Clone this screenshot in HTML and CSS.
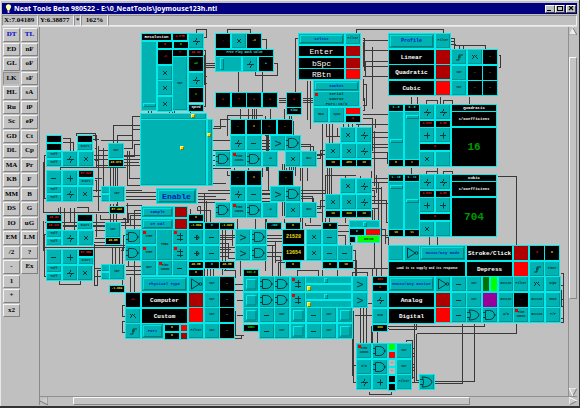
FILE: index.html
```html
<!DOCTYPE html>
<html lang="en">
<head>
<meta charset="utf-8">
<title>Neat Tools</title>
<link rel="stylesheet" href="styles.css">
</head>
<body>
<div class="window">
  <header class="titlebar">
    <svg class="bulb" viewBox="0 0 8 10" aria-hidden="true"><path d="M1 3a3 3 0 1 1 6 0c0 2-1.500 2-1.500 4h-3c0-2-1.500-2-1.500-4z" fill="#ffff9c"/><path d="M3 7h2v3H3z" fill="#ddd"/></svg>
    <h1>Neat Tools Beta 980522 - E:\0_NeatTools\joymouse123h.ntl</h1>
    <div class="sysbuttons">
      <button aria-label="Minimize"><svg viewBox="0 0 8 7"><path d="M1 5h4v1H1z"/></svg></button>
      <button aria-label="Maximize"><svg viewBox="0 0 8 7"><path d="M1 0h6v6H1zM2 2v3h4V2z" fill-rule="evenodd"/></svg></button>
      <button aria-label="Close"><svg viewBox="0 0 8 7"><path d="M2 1l4 4M6 1L2 5" stroke="#000" stroke-width="1.200"/></svg></button>
    </div>
  </header>
  <div class="status">
    <span class="coord">X:7.04189</span><span class="coord">Y:6.38877</span><span class="mark">*</span><span class="zoom">162%</span><span class="rest"></span>
  </div>
  <div class="main">
    <nav class="tools" id="tools" aria-label="Modules"></nav>
    <div class="work">
      <div class="canvas"><div class="layer" id="layer"><svg id="wires" class="wires" width="530" height="370" viewBox="40 27 530 370" aria-hidden="true"></svg></div></div>
      <div class="vbar"><button aria-label="Scroll up"><svg viewBox="0 0 8 8"><path d="M4 0L8 8H0z" fill="#ececec"/><path d="M4 1l4 7H0" fill="none" stroke="#777"/></svg></button><div class="vtrack"><div class="vthumb"></div></div><button aria-label="Scroll down"><svg viewBox="0 0 8 8"><path d="M0 0h8L4 8z" fill="#ccc"/><path d="M8 0L4 8" stroke="#777"/><path d="M8 0H0l4 8" fill="none" stroke="#fff"/></svg></button></div>
      <div class="hbar"><button aria-label="Scroll left"><svg viewBox="0 0 8 8"><path d="M0 4l8-4v8z" fill="#ccc"/><path d="M0 4l8 4V0" fill="none" stroke="#777"/></svg></button><div class="htrack"><div class="hthumb"></div></div><button aria-label="Scroll right"><svg viewBox="0 0 8 8"><path d="M8 4L0 8V0z" fill="#ccc"/><path d="M8 4L0 8" stroke="#777"/><path d="M0 8V0l8 4" fill="none" stroke="#fff"/></svg></button></div>
    </div>
  </div>
</div>
<script src="app.js"></script>
</body>
</html>
```
FILE: styles.css
```css
* { box-sizing: border-box; }
html, body { height: 100%; margin: 0; }
body { background: #c0c0c0; font-family: "Liberation Serif", serif; overflow: hidden; }
button { margin: 0; padding: 0; font: inherit; color: inherit; border: 0; background: none; display: flex; align-items: center; justify-content: center; overflow: hidden; }
svg { display: block; }
.window { display: flex; flex-direction: column; height: 100vh; padding: 3px 2px 1px; border-right: 1px solid #333; border-bottom: 2px solid #333; box-shadow: inset 1px 1px #e8e8e8; }
.titlebar { display: flex; align-items: center; height: 11px; background: #000080; color: #fff; padding: 0 1px 0 3px; }
.bulb { width: 7px; height: 9px; }
.titlebar h1 { flex: 1; margin: 0 0 0 2px; font: bold 7px/10px "Open Sans", sans-serif; white-space: nowrap; }
.sysbuttons { display: flex; }
.sysbuttons button { width: 10px; height: 8px; background: #c0c0c0; border: 1px solid; border-color: #fff #404040 #404040 #fff; }
.sysbuttons button:last-child { margin-left: 1px; }
.sysbuttons svg { width: 8px; height: 7px; }
.status { display: flex; height: 12px; padding: 1px 0; border-bottom: 1px solid #909090; font: bold 7px/9px "Liberation Serif", serif; box-shadow: 0 1px #dedede; }
.status span { border: 1px solid; border-color: #909090 #eee #eee #909090; padding: 0 1px; height: 11px; white-space: nowrap; }
.coord { width: 36px; }
.mark { width: 7px; text-align: center; }
.zoom { width: 27px; text-align: center; }
.rest { flex: 1; }
.main { flex: 1; display: flex; min-height: 0; padding-top: 1px; }
.tools { width: 37px; padding: 1px 1px 0 1px; display: grid; grid-template-columns: 17px 17px; column-gap: 1px; grid-template-rows: repeat(20, 1fr); height: 291px; }
.tools button { margin-bottom: 1px; font: bold 7px/9px "Liberation Serif", serif; color: #000; background: #c4c4c4; border: 1px solid; border-color: #f4f4f4 #808080 #808080 #f4f4f4; }
.tools .active { color: #0000c8; }
.tools .pressed { background: #b4b4b4; border-color: #909090 #c0c0c0 #c0c0c0 #909090; }
.work { flex: 1; min-width: 0; display: grid; grid-template-columns: 1fr 9px; grid-template-rows: 1fr 9px; border-left: 1px solid #8a8a8a; }
.canvas { overflow: hidden; min-height: 0; min-width: 0; }
.layer { position: relative; width: 530px; height: 370px; }
.vbar { display: flex; flex-direction: column; border-left: 1px solid #909090; }
.vbar button, .hbar button { width: 8px; height: 8px; flex: none; }
.vbar svg, .hbar svg { width: 8px; height: 8px; }
.vtrack { flex: 1; display: flex; flex-direction: column; padding-top: 22px; }
.vthumb { height: 73%; background: #c4c4c4; border: 1px solid; border-color: #f8f8f8 #888 #888 #f8f8f8; }
.hbar { grid-column: 1 / 3; display: flex; border-top: 1px solid #909090; }
.htrack { flex: 1; padding-left: 25px; }
.hthumb { width: 80%; height: 8px; background: #c4c4c4; border: 1px solid; border-color: #f8f8f8 #888 #888 #f8f8f8; }
.wires { position: absolute; left: 0; top: 0; fill: none; stroke: #383838; shape-rendering: crispEdges; }
.node { position: absolute; background: #00b2b2; border: 1px solid #00ecec; display: flex; align-items: center; justify-content: center; overflow: hidden; white-space: pre; color: #032f2f; font: bold 3px/4px "Liberation Mono", monospace; box-shadow: inset -1px -1px #009494; text-align: center; }
.node.black { background: #000; box-shadow: none; }
.node.dark { background: #ae0000; box-shadow: none; }
.node.bright { background: #f00; box-shadow: none; }
.node.lime { background: #0f0; box-shadow: none; }
.node.purple { background: #909; box-shadow: none; }
.node.grey { background: #b8b8b8; box-shadow: none; }
.node.mesh { background: #007000; box-shadow: none; }
.node.f4 { font-size: 4px; line-height: 5px; }
.node.f5 { font-size: 5px; line-height: 6px; }
.node.f6 { font-size: 6px; line-height: 7px; }
.node.f8 { font: 8px/9px "Liberation Mono", monospace; }
.node.f11 { font: bold 11px/12px "Liberation Mono", monospace; }
.node svg { width: 100%; height: 100%; fill: none; stroke: #013c3c; stroke-width: 1; flex: none; }
.node.push { color: #0018c0; padding: 0; }
.node.push.f8 { font-weight: bold; }
.node.push::before { content: ""; position: absolute; inset: 1px; border: 1px solid; border-color: #00e0e0 #007e7e #007e7e #00e0e0; }
.black.red { color: #f01818; }
.black.yellow { color: #f0e010; }
.black.green { color: #10e010; }
.black.cyan { color: #20e8e8; }
.black.white { color: #fff; }
.node.black.deep { color: #009800; }
.dot { position: absolute; width: 3px; height: 3px; background: #e80000; }
.knob { position: absolute; width: 4px; height: 4px; background: #f2d600; border: 1px solid; border-color: #ffff70 #857500 #857500 #ffff70; }
.range { position: absolute; margin: 0; appearance: none; background: #00b2b2; border: 1px solid #00ecec; }
.range.up { writing-mode: vertical-lr; direction: rtl; }
.range::-webkit-slider-thumb { appearance: none; width: 4px; height: 12px; background: #00b2b2; border: 1px solid; border-color: #00f0f0 #007c7c #007c7c #00f0f0; }
.range.up::-webkit-slider-thumb { width: 13px; height: 4px; }
.range.small::-webkit-slider-thumb { height: 5px; }
.range.gold::-webkit-slider-thumb { height: 5px; background: #f2d600; border-color: #ffff70 #857500 #857500 #ffff70; }
```
FILE: app.js
```js
const OX = 40, OY = 27, P = 47 / 3;
const layer = document.getElementById('layer');

// Module palette, row by row; an empty name leaves its slot free.
const palette = ['DT','TL','ED','nF','GL','oF','LK','sF','HL','sA','Ru','iP','Sc','eP','GD','Ct','DL','Cp','MA','Pr','KB','F','MM','B','DS','G','IO','uG','EM','LM','/2','?','-','Ex','1','','+','','x2',''];
palette.forEach((name, i) => {
  if (!name) { document.getElementById('tools').append(document.createElement('span')); return; }
  const b = document.createElement('button');
  b.textContent = name;
  if (i < 2) b.className = 'active';
  if (name === 'LK') b.className = 'pressed';
  document.getElementById('tools').append(b);
});

// Glyphs drawn on a 14 x 14 cell.
const glyphs = {
  '+': '<path d="M4 7.500h6M7.500 4.500v6"/>',
  '-': '<path d="M4 7.500h5"/>',
  '*': '<path d="M5 5l4 4M9 5l-4 4"/>',
  '/': '<path d="M4 7.500h7M7.500 4v2M7.500 9v2M6 6l3 3"/>',
  '>': '<path d="M4 5l6 2.500l-6 2.500"/>',
  'D': '<path d="M2.500 2.500h4a5 4.500 0 0 1 0 9H2.500zM11 7h2M0 4.500h2M0 9.500h2"/>',
  'O': '<path d="M2 2c6 0 9 2 10 5c-1 3-4 5-10 5c2-3 2-7 0-10zM0 4.500h3M0 9.500h3"/>',
  'N': '<path d="M2.500 2l8 5l-8 5z"/><circle cx="11.500" cy="7" r="1.300"/>',
  's': '<path d="M4 10h3V5h4M6 7h3"/>',
  'x': '<path d="M4 5l2 2l-2 2M6 5l4 4M9 5l-2 2"/>',
  'c': '<rect x="1" y="1" width="3" height="3" fill="#e00" stroke="none"/><path d="M4 5.500h6M4 9.500h6M7.500 3v8"/>',
  'a': '<path d="M5 7.500h5M7.500 5v5M8 5l2 2.500l-2 2.500"/>',
  'p': '<path d="M2.500 12V2.500h10" stroke="#00f0f0"/><path d="M12 2.500v9.500H2.500" stroke="#007c7c"/>'
};
const fills = { k: 'black', r: 'dark', R: 'bright', u: 'purple' };

function node(x, y, w, h, cls, text, tag) {
  const e = document.createElement(tag || 'div');
  e.className = 'node ' + cls;
  e.style.cssText = `left:${x - OX}px;top:${y - OY}px;width:${w}px;height:${h}px`;
  if (text) e.textContent = text;
  layer.append(e);
  return e;
}
const push = (x, y, w, h, text, size) => node(x, y, w, h, 'push ' + (size || 'f4'), text, 'button');
const label = (x, y, w, h, text, color, size) => node(x, y, w, h, `black ${color || 'white'} ${size || ''}`, text);
function mark(cls, x, y) {
  const e = document.createElement('span');
  e.className = cls;
  e.style.cssText = `left:${x - OX}px;top:${y - OY}px`;
  layer.append(e);
}

// A module: glyph key, "=text" for a captioned cell, "k:text:color" for a display.
function cell(x, y, w, h, t) {
  if (t === '_') return;
  if (t === 'i') { node(x, y, w, h, '', 'Time\n100ms'); mark('dot', x + 2, y + 2); return; }
  if (t[0] === '=') { node(x, y, w, h, '', t.slice(1)); return; }
  if (glyphs[t]) { node(x, y, w, h, '').innerHTML = `<svg viewBox="0 0 14 14">${glyphs[t]}</svg>`; return; }
  if (t === '.') { node(x, y, w, h, ''); return; }
  const [f, text, color] = t.split(':');
  node(x, y, w, h, `${fills[f]} ${color || ''}`, text);
}
function grid(x, y, ...rows) {
  rows.forEach((r, j) => r.split(' ').forEach((t, i) => cell(Math.round(x + i * P), Math.round(y + j * P), 16, 16, t)));
}
function half(x, y, ...rows) {
  rows.forEach((r, j) => r.split(' ').forEach((t, i) => cell(Math.round(x + i * P), Math.round(y + j * P / 2), 16, 8, t)));
}
function slider(x, y, w, h, value, cls, name) {
  const e = document.createElement('input');
  e.type = 'range'; e.value = value; e.className = 'range ' + cls;
  e.setAttribute('aria-label', name);
  e.style.cssText = `left:${x - OX}px;top:${y - OY}px;width:${w}px;height:${h}px`;
  layer.append(e);
}

// Connections, in canvas coordinates.
const wires = [
 'M196 33V29H206V37H203M203 50H205V106H203M203 55H204V84M203 63H215M203 65H215M203 67H215M203 76H206M203 83H206',
 'M227 33V29H250V33M261 39H266V56M273 63H277V75H255V71M238 71V92M262 71V92',
 'M148 110V114M151 110V113M169 110V114M172 110V114M174 110V114M190 110V114M141 116H132V135H125',
 'M83 159H141M83 155H141M100 140H141M122 148H132V129H141M120 125H141M122 156H134V144H141M96 165H141M123 162H138M127 150V185H141M129 150V178H141',
 'M113 143V125H120M117 143V135H125M45 155H44V198H46M44 162H43V212H108M44 222H128V213H141M60 170V167H125M76 207H88V212H58V207M60 214V206M64 207V242M70 207V222M74 207V242H108M92 135H96V166M92 139H98M76 135V133H95V140M62 138H70V151M62 142H73V151',
 'M94 148H96V163M94 160H98M94 178H101M92 190H101M92 196H101M94 180H96V191M98 145V210M98 150H108M103 147V195H109M110 167V186M113 167V186M115 167V186M117 167V206M110 203V222M113 203V222M116 203V222M112 246V264M115 246V264M119 246V264M122 246V285M125 190H141M125 192H156M125 196H156M125 199H160M125 205H141M127 202V222',
 'M62 226H105M62 225H105M94 230H105M94 238H105M94 245H125M44 247H125M45 234H44V276H46M43 220V250M59 280V284H80V280M94 243V285H97V270H101M94 268H101M94 276H103M122 218H125V229M121 225H130V215H141M96 213V236M120 250H123V235H125M125 270H141M125 266H141M125 274H141',
 'M125 305H122V316H125M125 321H122V332H125M130 292V276M134 292V210H141M128 265V260',
 'M207 150H230M207 155H215M207 160H215M207 165H215M207 168H230M207 140H230M207 128H220V119H230M213 126H225M207 183H225M207 190H325M197 193H325M197 196H215M197 199H225M197 202H230M197 206H200V214M190 208V214M197 210H210V222M204 193V222M206 200V222',
 'M240 108V119M248 108V119M252 108V119M254 108V119M256 108V119M270 108V127H285M278 98H286M278 100H286M278 102H286M227 135V115H262M284 108V119M289 115V185M291 115V190M293 120V200M265 115V135M266 118V170M267 118V170M268 118V190M261 140H270M261 143H270M261 146H270M261 149H270M300 144H310V151M300 146H313V154H325M295 160V175M282 163V215M284 163V215M286 167V202M248 167V175H227V170M262 167V176M234 167V170M300 167V180M302 167V240M307 167V180M316 158H320V150H340M316 155H321V152M322 123V225M327 167V210M329 167V225M331 167V205',
 'M261 190H270M261 194H270M261 198H270M261 201H270M300 196H312V202M300 198H313V206H325M316 208H320V200H340M316 212H322V240M265 218V270M266 218V229M284 218V222M237 218V229M255 218V229M278 224H266M320 225H305V222',
 'M356 33V29H443V33M362 38H364V70M362 42H363V66M362 46H364M362 52H364M362 61H388M362 66H388M362 40H388M362 50H388M362 76H388M372 46V108M365 76V61M363 78V100M363 84H366V105H362M450 38H454V50M450 41H454M450 44H455M454 45H485V49M459 45V49M463 45V49M498 55H500V67H498M298 38H295V92M310 80V128M307 80V119M302 98H313M302 100H313M302 102H313M362 114H388M362 118H372V150M362 110H364V97M332 123V143M329 123V150M326 123V136H340M343 123V127M348 123V127M352 123V127M358 123V127M375 118V127M371 132H388M371 137H388M371 144H388M371 147H388M371 152H388M371 158H388M387 152V163M337 135V127M355 124H388',
 'M411 96V104M417 96V107M440 96V104M469 96V104M426 103V100H437V103M443 103V100H452V103M411 167V174M437 167V174M426 174V171H437V174M443 174V171H452V174M497 176H516V245',
 'M371 170V182H388M374 130V185M374 178H388M371 190H374V203M371 196H375M371 208H378V182M371 203H388M376 174V192M378 186V230M381 186V276M371 188H381M371 200H386V222H388M380 235H388V221M380 229H385V243M388 237H384M355 175H325V194M345 175V179M360 175V179M372 209V220',
 'M219 235H235M219 237H235M219 239H232M219 243H228V258H235M219 247H235M219 249H230M219 252H235M219 256H227M222 229V274M225 229V270M266 235H282M266 238H282M266 241H282M266 252H282M266 256H280V285M266 245H275V260H282M204 261V277M207 261V277M210 261V277M213 261V277M223 270H235V277M285 262H278V276M297 276V270H318V276M352 250H355V276M352 260H356V276M372 276V268H388M337 269V276M322 269V276M234 284V320M236 315H243M236 300H243M232 290H243M235 310V334M234 284H243M234 335H243M240 245V275M241 334V338H228V334M300 222V212M280 262V277M275 240V262M272 245V290M302 212V222M374 208V268H352M376 268V276M352 303H372M354 315H372M352 307V375M356 280H362M356 290H362M367 276V272H352V276M363 276V343M360 293V343M366 293V343M353 310V382H357M356 365H353M371 325V343M377 331V343M414 323V340M372 350V325M416 323V329H388',
 'M560 273H563V322H560M560 285H563M560 290H561V305M560 299H563M560 306H563M560 318H563M414 323V382H419M416 333V380H419M416 333H516V323M462 323V383H433M474 323V381H433M414 290V245M437 236V245M378 326H484V323M383 328H388M406 341V340H412V378M411 348H414M411 353H414M411 356H414M411 364H414M411 367H414M411 370H414M411 377H414M411 382H416M369 391V394H391V391M388 245V236H404M429 236V245',
 'M141 225H120M141 219H100V214M134 238H141M188 258V262M219 226H232V245M203 210H197V206M345 216V222M325 217V222M310 222V212M320 240H306M337 235H345V250M337 231H350M345 265H350V235M335 225H349'
];
const svg = document.getElementById('wires');
wires.forEach(d => {
  const p = document.createElementNS('http://www.w3.org/2000/svg', 'path');
  p.setAttribute('d', d);
  p.setAttribute('transform', 'translate(0.5 0.5)');
  svg.append(p);
});

// Resolution
label(141, 33, 31, 8, 'Resolution', 'white', 'f4');
label(172, 33, 16, 8, '4.875', 'red');
slider(141, 41, 16, 70, 4, 'up', 'Resolution');
half(157, 41, 'k:0:red k:6:green');
grid(157, 49, 'k:-=:red', '*', '*', '*');
label(172, 49, 16, 8, '7', 'red');
node(172, 56, 16, 55, '', 'Var');
grid(188, 33, '/');
label(188, 49, 16, 8, '48.62', 'red');
grid(188, 56, 'k:+=:green', '/', 'k:=:green');
label(188, 104, 16, 8, 'Speed');

// Dash value
grid(215, 33, 'k:-:red * k:-=:yellow');
label(215, 49, 59, 8, 'Free Play Dash Value', 'cyan');
slider(215, 56, 27, 16, 20, '', 'Free play dash');
grid(242, 56, '/ k:+:cyan');
grid(215, 92, 'k:+:red k:÷:red k:+:red k:+:red');
grid(286, 92, 'k:+:red');
label(286, 107, 16, 8, 'Slow', 'cyan');

// Pointer pad
node(140, 113, 67, 7, '');
node(140, 119, 67, 67, '');
node(207, 119, 6, 67, '');
mark('knob', 191, 114); mark('knob', 207, 133); mark('knob', 180, 146);
push(156, 188, 41, 16, 'Enable', 'f8');

// Logic banks
grid(230, 119, 'k:-:cyan k:=:yellow k:+:red k:-:yellow', '/ -');
grid(269.5, 135, '> D');
grid(215, 151, 'D i D =-&');
grid(285, 151, '* =Out');
grid(230, 170, 'k:-:cyan k:=:yellow', '/ -');
grid(277.5, 170, 'k:-:yellow');
grid(269.5, 186, '> D');
grid(215, 202, 'D i D =-&');
grid(285, 202, '* =Out');
grid(340, 127, '* /');
grid(325, 143, '* * /');
half(325, 159, 'k:10:yellow k:480:yellow k:10:yellow');
grid(340, 178, '* /');
grid(325, 194, '* * /');
half(325, 210, 'k:10:yellow k:320:yellow k:10:yellow');

// Select and socket
push(298, 33, 47, 12, 'Select');
node(345, 33, 16, 12, '', 'Filter');
[['Enter', 45, 'dark'], ['bSpc', 57, 'dark'], ['RBtn', 68, 'bright']].forEach(([t, y, c]) => {
  label(298, y, 47, 12, t, 'white', 'f8');
  node(345, y, 16, 12, c);
});
push(313, 80, 47, 12, 'Socket');
node(313, 91, 47, 16, 'f4', 'Serial\nSource\nPort:19/9');
mark('dot', 315, 93);
grid(313, 107, '=Raw =Sync');
half(345, 107, 'R', 'k:4:red');

// Profile
push(388, 33, 47, 16, 'Profile', 'f5');
grid(435, 33, '=Filter');
[['Linear', 49, 'r'], ['Quadratic', 64, 'r'], ['Cubic', 80, 'R']].forEach(([t, y, c]) => {
  label(388, y, 47, 16, t, 'white', 'f6');
  grid(435, y, c);
});
grid(451, 49, 's x k:-:yellow', '=Var k:-:cyan k:-:yellow', '=Var k:-:cyan k:-:yellow');

// Coefficient panels
function panel(y, name, num, a, b, va, vb, la, lb) {
  half(388, y, `k:${va}:cyan k:${vb}:cyan`);
  slider(388, y + 7, 16, 49, a, 'up', name + ' base');
  slider(404, y + 7, 16, 49, b, 'up', name + ' scale');
  half(388, y + 55, `k:${la}:yellow k:${lb}:yellow`);
  grid(419, y, '/ /');
  half(419, y + 16, 'k:4.883:red k:4.88:red');
  grid(419, y + 23, '+ +');
  label(419, y + 39, 32, 8, '0', 'red');
  grid(419, y + 47, '* .');
  label(451, y, 46, 8, name, 'white', 'f4');
  label(451, y + 7, 46, 16, '1/Coefficient', 'white', 'f4');
  label(451, y + 23, 46, 40, num, 'deep', 'f11');
}
panel(104, 'Quadratic', '16', 38, 92, '1..8', '0..8', '8', '1');
panel(174, 'Cubic', '704', 92, 60, '1..10', '1..11', '10', '11');
slider(349, 220, 31, 8, 50, 'small', 'Level');
half(349, 228, 'k:0:cyan R');
label(349, 236, 7, 7, '');
node(357, 235, 23, 8, 'lime f4', '60%G');

// Left banks
half(46, 135, 'k _ k', 'k _ =Start', '=Toff', '=Toff');
grid(62, 151, '/ *');
grid(46, 170, '- +', '_ / *');
half(78, 170, 'k:57.023:red', '=Start');
half(46, 186, '=Toff', '=Toff');
half(46, 214, 'k:48.62:red _ k', 'k:48.131:red _ =Start', '=Toff', '=Toff');
grid(62, 230, '/ *');
grid(46, 249, '- +', '_ / *');
half(78, 249, 'k:57.052:red', '=Start');
half(46, 265, '=Toff', '=Toff');
grid(108, 143, '=Var');
half(108, 159, 'k:48.073:yellow');
half(101, 186, '.', '.');
grid(109, 186, '=Var');
half(109, 206, 'k:57.441:yellow');
grid(105, 222, '=Var');
half(105, 237, 'k:40.58:yellow');
grid(125, 229, 'D', 'D');
half(101, 264, '.', '.');
grid(109, 264, '=Var');
half(109, 285, 'k:-1.004:yellow');

// Calibration
push(141, 206, 33, 12, 'Sample');
push(141, 218, 33, 12, 'XY Cal');
node(174, 206, 14, 12, 'dark');
node(174, 218, 14, 12, 'dark');
half(188, 214, 'k:0:yellow', 'k:-1.004:yellow k:0:cyan k:-1.020:yellow');
half(266, 222, 'k:-163:cyan');
half(285, 222, 'k:0:yellow');
half(322, 222, 'k:0:yellow');
grid(141, 229, '=STEP _ c a -', '=STEP _ c a -', '=OUT i -');
node(156, 229, 17, 32, '', 'THEN');
mark('dot', 143, 231);
mark('dot', 143, 247);
grid(235, 229, '> D', '> D');
label(282, 229, 23, 16, '21528', 'yellow f5');
label(282, 245, 23, 16, '13654', 'yellow f5');
grid(306, 229, '* -', '* - -');
half(188, 261, 'k:40.85:yellow k:0:cyan k:40.85:yellow', 'k:0:yellow');
half(285, 261, 'k:0:yellow');
half(322, 261, 'k:0:yellow k:10:yellow');
half(243, 269, 'k:163.0:green');

// Physical type
push(141, 276, 47, 16, 'Physical Type', '');
grid(188, 276, 'N =Var k:-:white', 'r =Var k:-:white', 'R =Var k:-:white', '=Filter =Var k:-:white');
grid(125, 292, 'k:-=-:red', 'x', 's');
label(141, 292, 47, 16, 'Computer', 'white', 'f6');
label(141, 308, 47, 16, 'Custom', 'white', 'f6');
push(141, 323, 23, 16, 'Port');
half(164, 324, 'k:0:yellow', 'k:0:yellow');
node(180, 324, 8, 8, 'bright');
node(180, 332, 8, 8, 'dark');

// Timing bank
grid(243, 276, 'p D D c', 'p D D c', 'p - =Var p - =Var p', '_ - =Var p - =Var p');
half(243, 324, 'k:100%:green');
[276, 292].forEach(y => {
  slider(305, y, 47, 8, 45, 'small', 'Delay');
  slider(305, y + 8, 47, 8, 3, 'gold', 'Period');
  grid(352, y, '>');
});

// Mouse and key routing
half(372, 276, 'k:489:red', 'k:0:red');
grid(372, 292, '/', '=Sum');
half(372, 324, 'k:390:yellow');
grid(388, 245, '. N');
push(419, 245, 47, 16, 'Mouse/Key Mode', '');
label(466, 245, 47, 16, 'Stroke/Click', 'white', 'f6');
grid(513, 245, 'r k:3:red k:0:yellow', 'R s =Timer');
label(388, 261, 78, 16, 'Load is to supply and its response');
label(466, 261, 47, 16, 'Depress', 'white', 'f6');
push(388, 276, 47, 16, 'Mouse/Key Device', '');
label(388, 292, 47, 16, 'Analog', 'white', 'f6');
label(388, 308, 47, 16, 'Digital', 'white', 'f6');
grid(435, 276, 'N - =Var _ =Button =Filter x =Wipe', 'r - =Var u =Button k:-:red =Button =Move', 'R - O D =A/D i =Button =P/P');
node(482, 276, 8, 16, 'mesh');
node(490, 276, 8, 16, 'lime');

// Output bank
grid(356, 343, 'i D', '=S/D D', '/ +');
[['lime', ''], ['bright', ''], ['grey', '-'], ['grey', '-'], ['black', ''], ['black', '']].forEach(([c, t], i) => {
  node(388, 343 + 8 * i, 8, 8, c, t);
});
grid(396, 343, '=Var', '=Var', '=Filter');
grid(419, 374, 'O');
```
